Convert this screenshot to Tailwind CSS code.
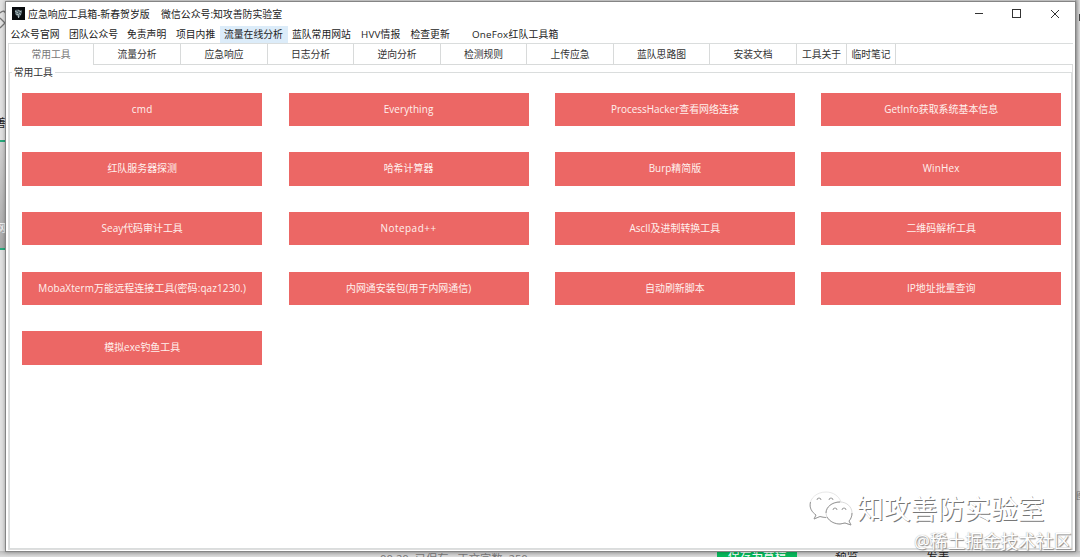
<!DOCTYPE html>
<html lang="zh-CN">
<head>
    <meta charset="UTF-8">
    <meta name="viewport" content="width=device-width, initial-scale=1.0">
    <title>应急响应工具箱</title>
    <script src="https://cdn.jsdelivr.net/npm/@tailwindcss/browser@4"></script>
</head>
<body class="relative w-[1080px] h-[557px] overflow-hidden bg-[#dedede] font-['Open_Sans','Noto_Sans_CJK_SC',sans-serif] text-[9.8px] leading-[14px] text-[#222]">
    <!-- Editor page behind the window -->
    <div class="absolute left-0 top-0 w-[6px] h-[557px] overflow-hidden bg-[#e2e2e2]">
        <svg class="absolute left-0 top-[10px]" width="6" height="20" viewBox="0 0 6 20" fill="none" stroke="#777" stroke-width="1.3"><path d="M0 3C3 0 5 1 6 4M0 8L5 13M0 18L5 13"/></svg>
        <span class="absolute -left-[5px] top-[116px] text-[11px]">善</span>
        <div class="absolute left-0 top-[140px] w-[6px] h-[110px] border-y-2 border-[#27ab7d] bg-linear-to-b from-[#d2d2d2] to-[#a9a9a9]"></div>
        <span class="absolute -left-[5px] top-[221px] text-[11px] text-white">网</span>
    </div>
    <div class="absolute right-0 top-0 w-[5px] h-[557px] overflow-hidden bg-linear-to-r from-[#aaa] to-[#dedede]">
        <div class="absolute right-0 top-[14px] w-px h-[7px] bg-[#444]"></div>
        <span class="absolute left-[1px] top-[489px] text-[9px] text-[#777]">图</span>
    </div>
    <div class="absolute left-0 top-[551px] w-[1080px] h-[6px] overflow-hidden bg-linear-to-b from-[#bdbdbd] to-[#dcdcdc] text-[11.3px] whitespace-pre">
        <span class="absolute left-[380px] top-[1px] text-[#777]">00:20  已保存   正文字数  250</span>
        <div class="absolute left-[717px] top-0 w-[80px] h-[6px] bg-[#07b75b]"></div>
        <span class="absolute left-[728px] -top-[2px] text-[11.7px] text-white">保存为草稿</span>
        <span class="absolute left-[835px] -top-[2px] text-[11.7px]">预览</span>
        <span class="absolute left-[926px] -top-[2px] text-[11.7px]">发表</span>
    </div>

    <!-- Application window -->
    <div class="absolute left-[5px] top-[1px] w-[1071px] h-[551px] flex flex-col border border-[#858585] bg-white shadow-[0_0_4px_rgba(0,0,0,0.35)]">
        <!-- Title bar -->
        <header class="flex items-center h-[24px] pl-[6px] pr-[15px] shrink-0">
            <svg class="w-[13px] h-[13px] mr-[3px] -mt-px" viewBox="0 0 13 13">
                <rect width="13" height="13" fill="#080b0e"/>
                <path d="M3 3L5.5 2.5L7 4L10 3L9.5 7L7 11L5 9L3 7Z" fill="#53656c"/>
                <path d="M3 4L6 6M6 3L9.5 5M4 7L7 8M7 6.5L9 7.5M6.5 8.5V11" stroke="#c9d5d7" stroke-width=".8" fill="none"/>
            </svg>
            <span class="w-[133px] whitespace-nowrap text-[9.9px]">应急响应工具箱-新春贺岁版</span>
            <span class="whitespace-nowrap text-[9.9px]">微信公众号:知攻善防实验室</span>
            <div class="ml-auto flex items-center gap-[28px]">
                <svg width="10" height="10" viewBox="0 0 10 10" stroke="#333"><path d="M1 4.5H9"/></svg>
                <svg width="10" height="10" viewBox="0 0 10 10" fill="none" stroke="#333"><rect x=".5" y=".5" width="8" height="8"/></svg>
                <svg width="10" height="10" viewBox="0 0 10 10" stroke="#333"><path d="M1 1L9 9M9 1L1 9"/></svg>
            </div>
        </header>

        <!-- Menu -->
        <nav class="flex h-[17px] leading-[18px] shrink-0 whitespace-nowrap">
            <span class="w-[58px] pl-[4.5px]">公众号官网</span>
            <span class="w-[59px] pl-[5px]">团队公众号</span>
            <span class="w-[49px] pl-[4px]">免责声明</span>
            <span class="w-[48px] pl-[4px]">项目内推</span>
            <span class="w-[68px] pl-[4px] bg-[#dcecf9]">流量在线分析</span>
            <span class="w-[69px] pl-[4px]">蓝队常用网站</span>
            <span class="w-[49px] pl-[4px] tracking-[0.2px]">HVV情报</span>
            <span class="w-[62px] pl-[4.5px]">检查更新</span>
            <span class="pl-[4px] tracking-[0.2px]">OneFox红队工具箱</span>
        </nav>

        <!-- Tabs -->
        <div class="flex h-[22px] ml-[2px] mr-[2px] leading-[22px] shrink-0 text-center whitespace-nowrap border-t border-[#dadddd] text-[#333]">
            <div class="w-[85px] border-l border-[#e2e2e2] text-[#777]">常用工具</div>
            <div class="w-[87px] border-l border-b border-[#d8dada]">流量分析</div>
            <div class="w-[87px] border-l border-b border-[#d8dada]">应急响应</div>
            <div class="w-[86px] border-l border-b border-[#d8dada]">日志分析</div>
            <div class="w-[87px] border-l border-b border-[#d8dada]">逆向分析</div>
            <div class="w-[86px] border-l border-b border-[#d8dada]">检测规则</div>
            <div class="w-[87px] border-l border-b border-[#d8dada]">上传应急</div>
            <div class="w-[96px] border-l border-b border-[#d8dada]">蓝队思路图</div>
            <div class="w-[87px] border-l border-b border-[#d8dada]">安装文档</div>
            <div class="w-[50px] border-l border-b border-[#d8dada]">工具关于</div>
            <div class="w-[50px] border-x border-b border-[#d8dada]">临时笔记</div>
            <div class="flex-1 border-b border-[#d8dada]"></div>
        </div>

        <!-- Tools -->
        <main class="flex-1 ml-[2px] mr-[2px] mb-[1px] pt-[7px] border-x border-b border-[#dedede]">
            <section class="h-full border border-[#dadddd] px-[12.2px]">
                <h2 class="w-[43px] -ml-[10px] -mt-[7px] pl-[1.5px] bg-white whitespace-nowrap text-[#333]">常用工具</h2>
                <div class="mt-[12.7px] grid grid-cols-[repeat(4,240px)] auto-rows-[33.3px] gap-[26.35px] text-[#fff1ee] text-[9.95px] text-center leading-[33.4px] whitespace-nowrap">
                    <div class="bg-[#ec6765] tracking-[0.3px]">cmd</div>
                    <div class="bg-[#ec6765] tracking-[0.1px]">Everything</div>
                    <div class="bg-[#ec6765]">ProcessHacker查看网络连接</div>
                    <div class="bg-[#ec6765]">GetInfo获取系统基本信息</div>
                    <div class="bg-[#ec6765]">红队服务器探测</div>
                    <div class="bg-[#ec6765]">哈希计算器</div>
                    <div class="bg-[#ec6765]">Burp精简版</div>
                    <div class="bg-[#ec6765] tracking-[0.2px]">WinHex</div>
                    <div class="bg-[#ec6765]">Seay代码审计工具</div>
                    <div class="bg-[#ec6765] tracking-[0.5px]">Notepad++</div>
                    <div class="bg-[#ec6765]">AsclI及进制转换工具</div>
                    <div class="bg-[#ec6765]">二维码解析工具</div>
                    <div class="bg-[#ec6765] tracking-[0.12px]">MobaXterm万能远程连接工具(密码:qaz1230.)</div>
                    <div class="bg-[#ec6765]">内网通安装包(用于内网通信)</div>
                    <div class="bg-[#ec6765]">自动刷新脚本</div>
                    <div class="bg-[#ec6765]">IP地址批量查询</div>
                    <div class="bg-[#ec6765]">模拟exe钓鱼工具</div>
                </div>
            </section>
        </main>
    </div>

    <!-- Watermarks -->
    <div class="absolute left-[809px] top-[491px] flex items-center text-white whitespace-nowrap">
        <svg class="w-[44px] h-[36px] mr-[4px]" viewBox="0 0 44 36" fill="#fff" stroke-linejoin="round">
            <path d="M17 1C8 1 1 7 1 14C1 19 4 22 7 24L5 28L11 25.500C13 26 16 27 18 26.500C16 19 22 11 32 11C30 5 24 1 17 1Z" stroke="#ddd" stroke-width=".7"/>
            <path d="M1.500 11C0 17 3 21 7 24L5 28L11 25.500C13 26 15 26.500 17 26.500" fill="none" stroke="#999"/>
            <path d="M31 11C23 11 17 16 17 22C17 28 24 33 31 33L36 32L42 34L40 30C42 28 43 25 43 22C43 16 38 11 31 11Z" stroke="#ccc" stroke-width=".7"/>
            <path d="M31 11C23 11 17 16 17 22M18 26C21 31 26 33 31 33L36 32L42 34L40 30C42 28 43 25 43 22" fill="none" stroke="#999"/>
            <path d="M8 9a2 2 0 0 1 4 0M20 9a2 2 0 0 1 4 0M24 19a2 2 0 0 1 4 0M33 19a2 2 0 0 1 4 0" fill="none" stroke="#999"/>
        </svg>
        <span class="text-[26.8px] leading-[36px] [text-shadow:1px_1px_0.6px_#777]">知攻善防实验室</span>
    </div>
    <div class="absolute left-[914px] top-[530px] text-[17.7px] leading-[22px] text-white whitespace-nowrap [text-shadow:0_0_1px_#999,1px_1px_1px_#888]">@稀土掘金技术社区</div>
</body>
</html>
